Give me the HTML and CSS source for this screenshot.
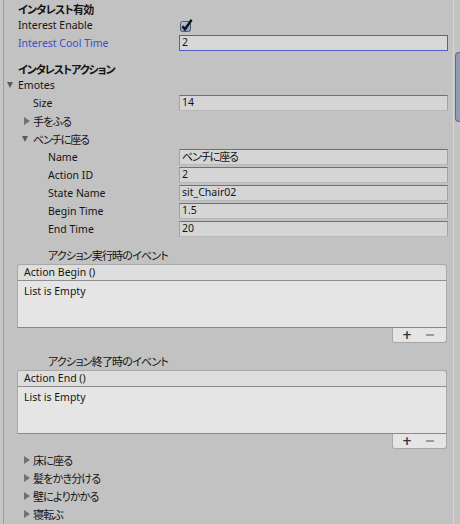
FILE: index.html
```html
<!DOCTYPE html>
<html lang="ja">
<head>
<meta charset="utf-8">
<link rel="stylesheet" href="styles.css">
</head>
<body>
<div class="window">
  <div class="edge"></div>
  <div class="content">
    <div class="heading h-top"><span class="jp">インタレスト有効</span></div>
    <div class="row">
      <span class="label lv0">Interest Enable</span>
      <span class="value">
        <svg class="check" width="14" height="14" viewBox="0 0 14 14">
          <defs>
            <linearGradient id="cg" x1="0" y1="0" x2="0" y2="1">
              <stop offset="0" stop-color="#b8c4d6"/>
              <stop offset="1" stop-color="#8496b2"/>
            </linearGradient>
          </defs>
          <rect x="1.5" y="3.5" width="10" height="10" rx="2" fill="url(#cg)" stroke="#4c5b72"/>
          <path d="M3.5 8.2 L6 11.2 L12.6 1.8" fill="none" stroke="#111" stroke-width="2.4" stroke-linejoin="miter"/>
        </svg>
      </span>
    </div>
    <div class="row">
      <span class="label lv0 focus-label">Interest Cool Time</span>
      <span class="field focus">2</span>
    </div>
    <div class="gap8"></div>
    <div class="heading h-mid"><span class="jp kana">インタレストアクション</span></div>
    <div class="row">
      <span class="label lv0 fold"><span class="arrow down"></span>Emotes</span>
    </div>
    <div class="row">
      <span class="label lv1">Size</span>
      <span class="field">14</span>
    </div>
    <div class="row">
      <span class="label lv1 fold"><span class="arrow right"></span><span class="jp">手をふる</span></span>
    </div>
    <div class="row">
      <span class="label lv1 fold"><span class="arrow down"></span><span class="jp kana">ベンチに座る</span></span>
    </div>
    <div class="row">
      <span class="label lv2">Name</span>
      <span class="field"><span class="jp kana">ベンチに座る</span></span>
    </div>
    <div class="row">
      <span class="label lv2">Action ID</span>
      <span class="field">2</span>
    </div>
    <div class="row">
      <span class="label lv2">State Name</span>
      <span class="field">sit_Chair02</span>
    </div>
    <div class="row">
      <span class="label lv2">Begin Time</span>
      <span class="field">1.5</span>
    </div>
    <div class="row">
      <span class="label lv2">End Time</span>
      <span class="field">20</span>
    </div>
    <div class="gap8"></div>
    <div class="row">
      <span class="label lv2"><span class="jp">アクション実行時のイベント</span></span>
    </div>
    <div class="evbox">
      <div class="evhead">Action Begin ()</div>
      <div class="evbody">List is Empty</div>
      <div class="evfoot"><span class="plus">+</span><span class="minus"></span></div>
    </div>
    <div class="gap9"></div>
    <div class="row">
      <span class="label lv2"><span class="jp">アクション終了時のイベント</span></span>
    </div>
    <div class="evbox">
      <div class="evhead">Action End ()</div>
      <div class="evbody">List is Empty</div>
      <div class="evfoot"><span class="plus">+</span><span class="minus"></span></div>
    </div>
    <div class="gap2"></div>
    <div class="row">
      <span class="label lv1 fold"><span class="arrow right"></span><span class="jp">床に座る</span></span>
    </div>
    <div class="row">
      <span class="label lv1 fold"><span class="arrow right"></span><span class="jp">髪をかき分ける</span></span>
    </div>
    <div class="row">
      <span class="label lv1 fold"><span class="arrow right"></span><span class="jp">壁によりかかる</span></span>
    </div>
    <div class="row">
      <span class="label lv1 fold"><span class="arrow right"></span><span class="jp">寝転ぶ</span></span>
    </div>
  </div>
  <div class="scrollbar"><div class="thumb"></div></div>
</div>
</body>
</html>
```
FILE: styles.css
```css
html, body {
  margin: 0;
  padding: 0;
}
body {
  background: #c2c2c2;
  font-family: "Noto Sans", "Noto Sans CJK JP", sans-serif;
  font-size: 10.5px;
  color: #141414;
}
.window {
  display: flex;
  width: 460px;
  height: 524px;
  overflow: hidden;
}
.edge {
  width: 3px;
  flex: none;
  background: #c6c6c6;
  border-right: 1px solid #9e9e9e;
}
.content {
  width: 449px;
  flex: none;
}
.scrollbar {
  width: 6px;
  flex: none;
  border-left: 1px solid #d6d6d6;
  background: #c3c3c3;
}
.thumb {
  margin-top: 52px;
  margin-left: 1px;
  height: 68px;
  background: #8e9db4;
  border: 1px solid #5f6d84;
  border-right: none;
  border-radius: 4px 0 0 4px;
}
.jp {
  font-family: "Noto Sans CJK JP", sans-serif;
  font-feature-settings: "palt";
  font-size: 11px;
  letter-spacing: -0.8px;
}
.jp.kana {
  letter-spacing: -1.1px;
}
.heading {
  font-weight: bold;
  padding-left: 14px;
  display: flex;
  align-items: center;
}
.h-top {
  height: 16px;
  padding-top: 2px;
  box-sizing: border-box;
}
.h-mid {
  height: 16px;
  padding-top: 2px;
  box-sizing: border-box;
}
.row {
  height: 18px;
  display: flex;
  align-items: center;
}
.label {
  width: 175px;
  flex: none;
  box-sizing: border-box;
  white-space: nowrap;
  display: flex;
  align-items: center;
  padding-bottom: 1px;
}
.lv0 { padding-left: 14px; }
.lv1 { padding-left: 29px; }
.lv2 { padding-left: 44px; }
.fold.lv0 { padding-left: 3px; }
.fold.lv1 { padding-left: 18px; }
.arrow {
  width: 11px;
  height: 10px;
  flex: none;
  display: flex;
  align-items: center;
}
.arrow.down::before {
  content: "";
  border-left: 3.5px solid transparent;
  border-right: 3.5px solid transparent;
  border-top: 6px solid #5a5a5a;
}
.arrow.right::before {
  content: "";
  border-top: 4px solid transparent;
  border-bottom: 4px solid transparent;
  border-left: 6px solid #727272;
  margin-left: 2px;
}
.focus-label {
  color: #3451c6;
}
.value {
  display: flex;
  align-items: center;
}
.check {
  display: block;
  margin-top: -1px;
}
.field {
  width: 269px;
  height: 16px;
  box-sizing: border-box;
  background: #d5d5d5;
  border: 1px solid #a2a2a2;
  border-top-color: #707070;
  border-bottom-color: #b8b8b8;
  padding-left: 2px;
  line-height: 13px;
  white-space: nowrap;
  overflow: hidden;
}
.field.focus {
  border: 1px solid #4a60c6;
  background: #d7d7d7;
}
.gap8 { height: 8px; }
.gap9 { height: 9px; }
.gap2 { height: 2px; }
.evbox {
  margin-left: 13px;
  width: 430px;
  display: flex;
  flex-direction: column;
}
.evhead {
  height: 17px;
  box-sizing: border-box;
  background: #dedede;
  border: 1px solid #a8a8a8;
  border-bottom-color: #8e8e8e;
  border-radius: 3px 3px 0 0;
  padding-left: 6px;
  line-height: 15px;
}
.evbody {
  height: 47px;
  box-sizing: border-box;
  background: #e5e5e5;
  border: 1px solid #a8a8a8;
  border-top: none;
  border-bottom-color: #8a8a8a;
  padding: 3px 0 0 6px;
  line-height: 14px;
}
.evfoot {
  align-self: flex-end;
  width: 55px;
  height: 15px;
  box-sizing: border-box;
  background: #e5e5e5;
  border: 1px solid #a8a8a8;
  border-top: none;
  border-radius: 0 0 3px 3px;
  display: flex;
  align-items: center;
  padding-left: 9px;
  gap: 15px;
}
.plus {
  font-family: "DejaVu Sans", sans-serif;
  font-weight: bold;
  font-size: 12px;
  line-height: 12px;
  color: #333;
  width: 9px;
  text-align: center;
}
.minus {
  width: 8px;
  height: 2px;
  background: #9a9a9a;
}
```
